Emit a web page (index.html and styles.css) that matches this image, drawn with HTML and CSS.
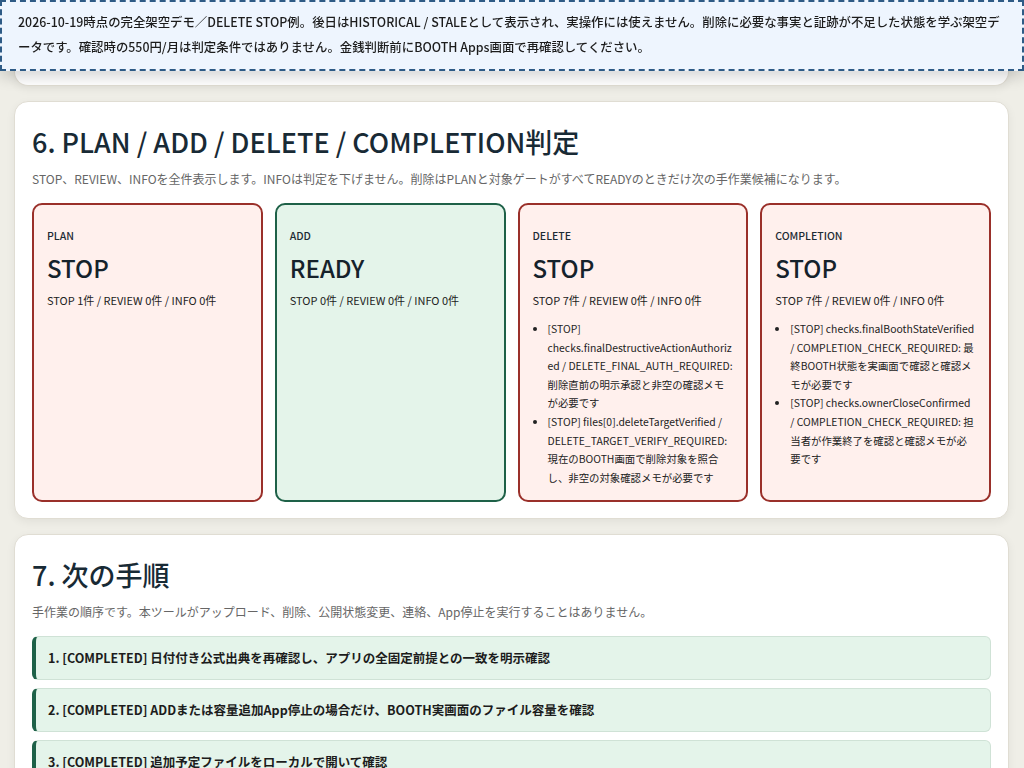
FILE: index.html
```html
<!DOCTYPE html>
<html lang="ja">
<head>
    <meta charset="UTF-8">
    <meta name="viewport" content="width=device-width, initial-scale=1.0">
    <title>BOOTH Apps 判定デモ</title>
    <link rel="stylesheet" href="styles.css">
</head>
<body>

    <div class="notice">
        2026-10-19時点の完全架空デモ／DELETE STOP例。後日はHISTORICAL / STALEとして表示され、実操作には使えません。削除に必要な事実と証跡が不足した状態を学ぶ架空データです。確認時の550円/月は判定条件ではありません。金銭判断前にBOOTH Apps画面で再確認してください。
    </div>

    <main class="page">
        <section class="card card-prev"></section>

        <section class="card">
            <h2>6. PLAN / ADD / DELETE / COMPLETION判定</h2>
            <p class="lead">STOP、REVIEW、INFOを全件表示します。INFOは判定を下げません。削除はPLANと対象ゲートがすべてREADYのときだけ次の手作業候補になります。</p>

            <div class="gates">
                <div class="gate stop">
                    <div class="gate-label">PLAN</div>
                    <div class="gate-state">STOP</div>
                    <div class="gate-count">STOP 1件 / REVIEW 0件 / INFO 0件</div>
                </div>
                <div class="gate ready">
                    <div class="gate-label">ADD</div>
                    <div class="gate-state">READY</div>
                    <div class="gate-count">STOP 0件 / REVIEW 0件 / INFO 0件</div>
                </div>
                <div class="gate stop">
                    <div class="gate-label">DELETE</div>
                    <div class="gate-state">STOP</div>
                    <div class="gate-count">STOP 7件 / REVIEW 0件 / INFO 0件</div>
                    <ul class="gate-list">
                        <li>[STOP] checks.finalDestructiveActionAuthorized / DELETE_FINAL_AUTH_REQUIRED: 削除直前の明示承認と非空の確認メモが必要です</li>
                        <li>[STOP] files[0].deleteTargetVerified / DELETE_TARGET_VERIFY_REQUIRED: 現在のBOOTH画面で削除対象を照合し、非空の対象確認メモが必要です</li>
                    </ul>
                </div>
                <div class="gate stop">
                    <div class="gate-label">COMPLETION</div>
                    <div class="gate-state">STOP</div>
                    <div class="gate-count">STOP 7件 / REVIEW 0件 / INFO 0件</div>
                    <ul class="gate-list">
                        <li>[STOP] checks.finalBoothStateVerified / COMPLETION_CHECK_REQUIRED: 最終BOOTH状態を実画面で確認と確認メモが必要です</li>
                        <li>[STOP] checks.ownerCloseConfirmed / COMPLETION_CHECK_REQUIRED: 担当者が作業終了を確認と確認メモが必要です</li>
                    </ul>
                </div>
            </div>
        </section>

        <section class="card">
            <h2>7. 次の手順</h2>
            <p class="lead">手作業の順序です。本ツールがアップロード、削除、公開状態変更、連絡、App停止を実行することはありません。</p>

            <ol class="steps">
                <li>1. [COMPLETED] 日付付き公式出典を再確認し、アプリの全固定前提との一致を明示確認</li>
                <li>2. [COMPLETED] ADDまたは容量追加App停止の場合だけ、BOOTH実画面のファイル容量を確認</li>
                <li>3. [COMPLETED] 追加予定ファイルをローカルで開いて確認</li>
                <li>4. [PENDING] 削除対象をBOOTH実画面で照合</li>
            </ol>
        </section>
    </main>

</body>
</html>
```

FILE: styles.css
```css
body {
    margin: 0;
    font-family: "Noto Sans CJK JP", "Noto Sans", sans-serif;
    background: #efeee7;
    color: #1d2b34;
}

.notice {
    position: fixed;
    top: 0;
    left: 0;
    right: 0;
    z-index: 10;
    padding: 8px 10px 9px 16px;
    background: #eef5fe;
    border: 2px dashed #2e5b86;
    font-size: 12.4px;
    font-weight: 500;
    line-height: 25px;
    color: #1c1c1c;
    box-shadow: 0 6px 14px rgba(0, 0, 0, 0.16);
}

.page {
    padding: 0 15px 20px 14px;
}

.card {
    background: #fff;
    border: 1px solid #e0ddd3;
    border-radius: 14px;
    padding: 20px 17px 16px 17px;
    margin-bottom: 15px;
    box-shadow: 0 3px 10px rgba(0, 0, 0, 0.06);
}

.card-prev {
    height: 85px;
    padding: 0;
    border-top: none;
    border-radius: 0 0 14px 14px;
}

h2 {
    font-size: 27px;
    font-weight: 500;
    line-height: 40px;
    margin: 0 0 8px;
    color: #182a35;
}

.lead {
    font-size: 12px;
    color: #666;
    margin: 0 0 15px;
    line-height: 18px;
}

.gates {
    display: grid;
    grid-template-columns: repeat(4, minmax(0, 1fr));
    gap: 12px;
}

.gate {
    border: 2px solid;
    border-radius: 10px;
    padding: 23px 13px 13px;
    min-height: 255px;
}

.gate.stop {
    background: #fff0ed;
    border-color: #9a302a;
}

.gate.ready {
    background: #e4f4ea;
    border-color: #1e6148;
}

.gate-label {
    font-size: 10.5px;
    font-weight: 500;
    line-height: 16px;
}

.gate-state {
    font-size: 24px;
    font-weight: 500;
    line-height: 30px;
    margin: 9px 0 8px;
    color: #15222b;
}

.gate-count {
    font-size: 11px;
    line-height: 18px;
    color: #222;
}

.gate-list {
    margin: 11px 0 0;
    padding-left: 15px;
    font-size: 10.4px;
    line-height: 18.6px;
    color: #222;
    overflow-wrap: break-word;
}

.steps {
    list-style: none;
    margin: 0;
    padding: 0;
    display: flex;
    flex-direction: column;
    gap: 8px;
}

.steps li {
    background: #e4f4ea;
    border: 1px solid #cfe2d6;
    border-left: 4px solid #1e6148;
    border-radius: 6px;
    padding: 11px 12px;
    font-size: 12.5px;
    font-weight: 600;
    line-height: 20px;
    color: #1c1c1c;
}
```
